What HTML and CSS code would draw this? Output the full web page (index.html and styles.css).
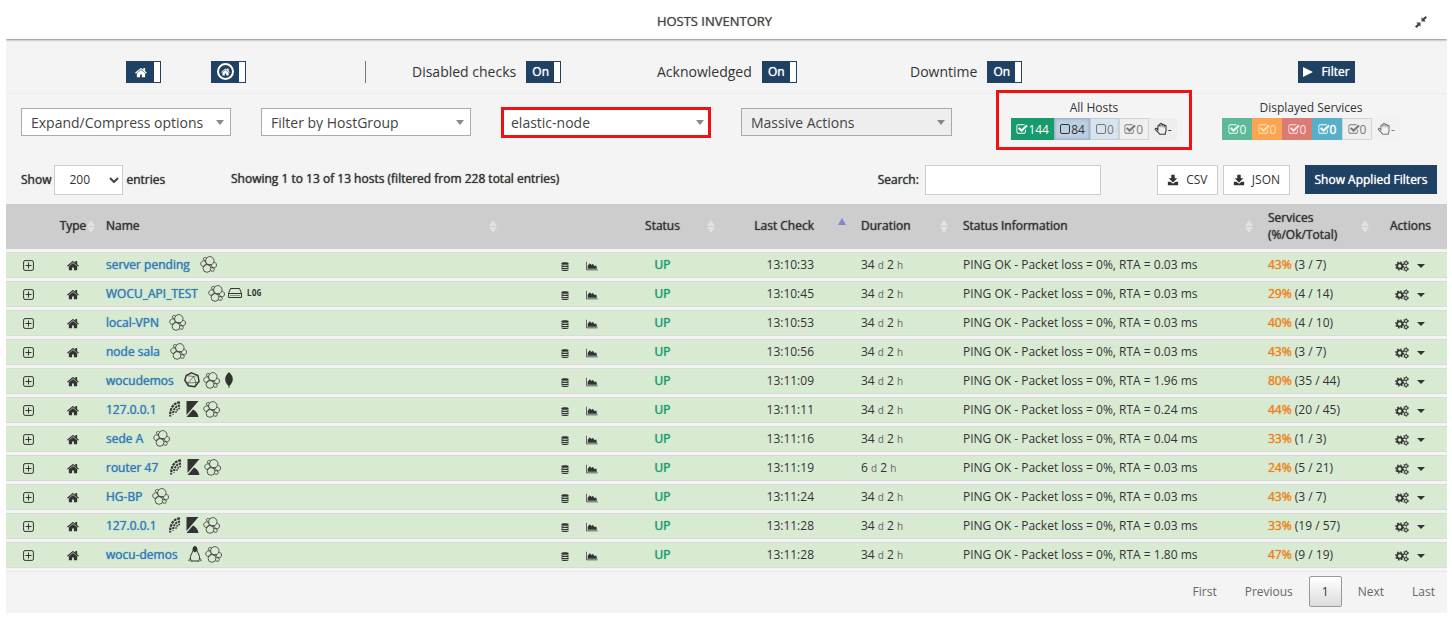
FILE: index.html
```
<!DOCTYPE html>
<html lang="en">
<head>
<meta charset="utf-8">
<title>Hosts Inventory</title>
<link rel="stylesheet" href="styles.css">
</head>
<body>
<svg class="sprite" aria-hidden="true">
  <symbol id="home" viewBox="0 0 1664 1600"><path d="M1408 992v480q0 26-19 45t-45 19H960v-384H704v384H320q-26 0-45-19t-19-45V992q0-1 .5-3t.5-3l575-474 575 474q1 2 1 6zm223-69l-62 74q-8 9-21 11h-3q-13 0-21-7L832 424l-692 577q-12 8-24 7-13-2-21-11l-62-74q-8-10-7-23.500t11-21.500l719-599q32-26 76-26t76 26l244 204V288q0-14 9-23t23-9h192q14 0 23 9t9 23v408l219 182q10 8 11 21.500t-7 23.500z"/></symbol>
  <symbol id="check" viewBox="0 60 1792 1540"><path d="M1472 930v318q0 119-84.500 203.500T1184 1536H352q-119 0-203.500-84.500T64 1248V416q0-119 84.500-203.500T352 128h832q63 0 117 25 15 7 18 23 3 17-9 29l-49 49q-10 10-23 10-3 0-9-2-23-6-45-6H352q-66 0-113 47t-47 113v832q0 66 47 113t113 47h832q66 0 113-47t47-113v-254q0-13 9-22l64-64q10-10 23-10 6 0 12 3 20 8 20 29zm231-489l-814 814q-24 24-57 24t-57-24L345 825q-24-24-24-57t24-57l110-110q24-24 57-24t57 24l263 263 647-647q24-24 57-24t57 24l110 110q24 24 24 57t-24 57z"/></symbol>
  <symbol id="box" viewBox="0 0 12 12"><rect x="1.500" y="1.500" width="9" height="9" rx="1.500" fill="none" stroke="currentColor"/></symbol>
  <symbol id="hand" viewBox="0 0 16 16"><path d="M4.500 9.500V4.200a1.200 1.200 0 0 1 2.300 0V2.700a1.200 1.200 0 0 1 2.400 0v1a1.200 1.200 0 0 1 2.400 0v1.200a1.100 1.100 0 0 1 2.200 0v4.600c0 1.500-1 2.500-1 4.500H6.500c0-1.500-4.500-4.300-5-5.500-.5-1.300 1.200-1.900 2-1z" fill="none" stroke="currentColor" stroke-width="1.200" stroke-linejoin="round"/><path d="M6.800 4v2M9.200 3.500v2.500M11.600 4.500v2" fill="none" stroke="currentColor" stroke-width=".6"/></symbol>
  <symbol id="down" viewBox="0 0 14 14"><path d="M5 1h4v4h3L7 10 2 5h3zM1 9h3l3 2.500L10 9h3v4H1z"/></symbol>
  <symbol id="compress" viewBox="0 0 12 12"><path d="M6.500 5.500V1.200l1.400 1.400L10.500 0 12 1.500 9.400 4.100l1.400 1.400zM5.500 6.500v4.300L4.100 9.400 1.500 12 0 10.500l2.600-2.600-1.400-1.400z"/></symbol>
  <symbol id="plus" viewBox="0 0 11 11"><rect x=".6" y=".6" width="9.800" height="9.800" rx="1.500" fill="none" stroke="currentColor"/><path d="M5.500 2.500v6M2.500 5.500h6" stroke="currentColor"/></symbol>
  <symbol id="db" viewBox="0 0 8 10"><path d="M0 1.300C0-.2 8-.2 8 1.300v.8C8 3.500 0 3.500 0 2.100zM0 3.300c1.500 1 6.500 1 8 0v1.300C8 6 0 6 0 4.600zM0 5.800c1.500 1 6.500 1 8 0v1.300c0 1.400-8 1.400-8 0zM0 8.200c1.500 1 6.500 1 8 0v.7c0 1.400-8 1.400-8 0z"/></symbol>
  <symbol id="chart" viewBox="0 0 2048 1792"><path d="M2048 1536v128H0V128h128v1408h1920zM1792 800l128 608H256V832l384-448 300 330 250-230 250 400z"/></symbol>
  <symbol id="cogs" viewBox="0 0 14 12"><g fill="none" stroke="currentColor"><circle cx="4.700" cy="6" r="2.600" stroke-width="1.800"/><circle cx="4.700" cy="6" r="4" stroke-width="1.200" stroke-dasharray="1.600 1.540"/><circle cx="11" cy="3" r="1.500" stroke-width="1.100"/><circle cx="11" cy="3" r="2.400" stroke-width=".8" stroke-dasharray="1.100 1.410"/><circle cx="11" cy="9" r="1.500" stroke-width="1.100"/><circle cx="11" cy="9" r="2.400" stroke-width=".8" stroke-dasharray="1.100 1.410"/></g></symbol>
  <symbol id="elastic" viewBox="0 0 17 17"><g fill="none" stroke="currentColor" stroke-width=".8"><circle cx="9.800" cy="4.800" r="4.200"/><circle cx="7" cy="12.400" r="3.900"/><path d="M5.600 4.400C3.300 4.600 2.600 2.300 4.300 1.600c1-.4 2 0 2.500.6M6 6.700C5.600 5.300 4.200 4.500 2.900 5 .4 5.600.1 9 1.900 10c.6.400 1.300.5 1.800.3M3.700 10.300c1.700-.4 2.500-1.800 2.600-3.200M13.500 6.500c1.500-.5 3 .7 3 2.500 0 2-1.300 3-2.700 2.700-1.800-.2-2.700-1.700-2.300-3.200M10.900 12c.8-.8 3.300-.5 3.400 1.400.1 1.800-2 2.500-3.600 1.300M8.500 8.800l2.700-.1"/></g></symbol>
  <symbol id="drive" viewBox="0 0 14 12"><path d="M2.500 1.500h9l2 5v4H.5v-4zM.5 6.500h13" fill="none" stroke="currentColor"/><path d="M2.500 8.500h9" stroke="currentColor" stroke-dasharray="1 1"/></symbol>
  <symbol id="poly" viewBox="0 0 16 16"><path d="M7.500.8l6.400 2.600 1.200 6.200-4.300 5.200-6.400-1L.8 8.500l1.400-5z" fill="none" stroke="currentColor" stroke-width="1.400"/><path d="M9.500 4.500L4 11l8-.5zM9.500 4.500l4.400-1.100M4 11L.8 8.500M4 11l.4 2.800M12 10.500l-1.200 4.300M9.500 4.500L2.200 3.500M12 10.500l3.100-.9" fill="none" stroke="currentColor" stroke-width=".6"/></symbol>
  <symbol id="leaf" viewBox="0 0 8 16"><path d="M4 0c5 5 5 9 .5 14l-.2 2h-.6l-.2-2C-1 9-1 5 4 0z"/></symbol>
  <symbol id="shell" viewBox="0 0 12 16"><g fill="none" stroke="currentColor"><path d="M11.500 1.300C5 2 1.500 6.500 1.700 15.500" stroke-width="2.200" stroke-dasharray="2.800 .8"/><path d="M11.500 4.500C7 5 4.700 8.500 4.500 13.500" stroke-width="2" stroke-dasharray="2.200 .8"/><path d="M11.500 7.300C9 7.800 7.500 10 7.200 12.300" stroke-width="1.500" stroke-dasharray="1.600 .8"/></g></symbol>
  <symbol id="kibana" viewBox="0 0 12 16"><path d="M0 0h12L0 14zM6.500 8.500c3 1.300 5 4 5.500 7.500H0z"/></symbol>
  <symbol id="tux" viewBox="0 0 14 16"><path d="M5 4.500C4.300-.7 9.600-.7 9 4.500c.3 2 3 4.500 2.700 8.500l-2 2H4.300l-2-2C2 9 4.700 6.500 5 4.500z" fill="none" stroke="currentColor"/><path d="M5 1.500C6-.3 8.500 0 9 2v3L7 6.500 5 5z"/><path d="M2.300 12L.5 14.500 4.500 15.500M11.700 12l1.800 2.500-4 1" fill="none" stroke="currentColor" stroke-width=".7"/></symbol>
</svg>

<main class="panel">
  <header class="titlebar">
    <h1>HOSTS INVENTORY</h1>
    <button class="compress" aria-label="Compress"><svg><use href="#compress"/></svg></button>
  </header>

  <section class="switches">
    <label class="toggle"><input type="checkbox" checked aria-label="Hosts"><span><svg class="i-home"><use href="#home"/></svg></span></label>
    <label class="toggle"><input type="checkbox" checked aria-label="Host groups"><span><b class="ring"><svg class="i-mini"><use href="#home"/></svg></b></span></label>
    <i class="separator"></i>
    <label class="toggle">Disabled checks<input type="checkbox" checked><span class="bold">On</span></label>
    <label class="toggle">Acknowledged<input type="checkbox" checked><span class="bold">On</span></label>
    <label class="toggle">Downtime<input type="checkbox" checked><span class="bold">On</span></label>
    <button class="primary filter bold"><i class="play"></i>Filter</button>
  </section>

  <section class="selects">
    <div class="combo"><select aria-label="Expand or compress"><option>Expand/Compress options</option></select></div>
    <div class="combo"><select aria-label="Host group"><option>Filter by HostGroup</option></select></div>
    <div class="combo marked"><select aria-label="Filter"><option>elastic-node</option></select></div>
    <div class="combo muted"><select aria-label="Massive actions"><option>Massive Actions</option></select></div>
    <div class="counts hosts">
      <p>All Hosts</p>
      <div class="badges">
        <button class="up"><svg><use href="#check"/></svg>144</button><button class="down"><svg><use href="#box"/></svg>84</button><button class="pale"><svg><use href="#box"/></svg>0</button><button class="gray"><svg><use href="#check"/></svg>0</button><button class="held"><svg class="i-hand"><use href="#hand"/></svg>-</button>
      </div>
    </div>
    <div class="counts services">
      <p>Displayed Services</p>
      <div class="badges">
        <button class="ok"><svg><use href="#check"/></svg>0</button><button class="warn"><svg><use href="#check"/></svg>0</button><button class="crit"><svg><use href="#check"/></svg>0</button><button class="unknown bold"><svg><use href="#check"/></svg>0</button><button class="gray"><svg><use href="#check"/></svg>0</button><button class="held faded"><svg class="i-hand"><use href="#hand"/></svg>-</button>
      </div>
    </div>
  </section>

  <section class="tools">
    <label class="length bold">Show <span class="pick"><select><option>200</option></select><svg viewBox="0 0 10 6"><path d="M1 1l4 4 4-4"/></svg></span> entries</label>
    <p class="info bold">Showing 1 to 13 of 13 hosts (filtered from 228 total entries)</p>
    <label class="search bold">Search: <input type="text"></label>
    <button class="plain"><svg><use href="#down"/></svg>CSV</button>
    <button class="plain"><svg><use href="#down"/></svg>JSON</button>
    <button class="primary applied bold">Show Applied Filters</button>
  </section>

  <table class="inventory">
    <colgroup><col class="w-open"><col class="w-type"><col><col class="w-tools"><col class="w-status"><col class="w-last"><col class="w-duration"><col class="w-info"><col class="w-services"><col class="w-actions"></colgroup>
    <thead>
      <tr><th></th><th class="mid sort tight">Type</th><th class="sort">Name</th><th></th><th class="mid sort">Status</th><th class="end sort asc">Last Check</th><th class="sort">Duration</th><th class="sort">Status Information</th><th class="sort">Services (%/Ok/Total)</th><th class="mid">Actions</th></tr>
    </thead>
    <tbody>
      <tr><td class="mid"><button aria-label="Expand"><svg class="i-plus"><use href="#plus"/></svg></button></td><td class="mid"><svg class="i-home"><use href="#home"/></svg></td><td><div class="host"><a href="#">server pending</a><svg class="i-el"><use href="#elastic"/></svg></div></td><td><div class="pair"><svg class="i-db"><use href="#db"/></svg><svg class="i-chart"><use href="#chart"/></svg></div></td><td class="mid state">UP</td><td class="end">13:10:33</td><td>34 <small>d</small> 2 <small>h</small></td><td>PING OK - Packet loss = 0%, RTA = 0.03 ms</td><td><b>43%</b> (3 / 7)</td><td><button class="act" aria-label="Actions"><svg class="i-cogs"><use href="#cogs"/></svg><i class="caret"></i></button></td></tr>
      <tr><td class="mid"><button aria-label="Expand"><svg class="i-plus"><use href="#plus"/></svg></button></td><td class="mid"><svg class="i-home"><use href="#home"/></svg></td><td><div class="host"><a href="#">WOCU_API_TEST</a><svg class="i-el"><use href="#elastic"/></svg><svg class="i-drive"><use href="#drive"/></svg><span class="log">LOG</span></div></td><td><div class="pair"><svg class="i-db"><use href="#db"/></svg><svg class="i-chart"><use href="#chart"/></svg></div></td><td class="mid state">UP</td><td class="end">13:10:45</td><td>34 <small>d</small> 2 <small>h</small></td><td>PING OK - Packet loss = 0%, RTA = 0.03 ms</td><td><b>29%</b> (4 / 14)</td><td><button class="act" aria-label="Actions"><svg class="i-cogs"><use href="#cogs"/></svg><i class="caret"></i></button></td></tr>
      <tr><td class="mid"><button aria-label="Expand"><svg class="i-plus"><use href="#plus"/></svg></button></td><td class="mid"><svg class="i-home"><use href="#home"/></svg></td><td><div class="host"><a href="#">local-VPN</a><svg class="i-el"><use href="#elastic"/></svg></div></td><td><div class="pair"><svg class="i-db"><use href="#db"/></svg><svg class="i-chart"><use href="#chart"/></svg></div></td><td class="mid state">UP</td><td class="end">13:10:53</td><td>34 <small>d</small> 2 <small>h</small></td><td>PING OK - Packet loss = 0%, RTA = 0.03 ms</td><td><b>40%</b> (4 / 10)</td><td><button class="act" aria-label="Actions"><svg class="i-cogs"><use href="#cogs"/></svg><i class="caret"></i></button></td></tr>
      <tr><td class="mid"><button aria-label="Expand"><svg class="i-plus"><use href="#plus"/></svg></button></td><td class="mid"><svg class="i-home"><use href="#home"/></svg></td><td><div class="host"><a href="#">node sala</a><svg class="i-el"><use href="#elastic"/></svg></div></td><td><div class="pair"><svg class="i-db"><use href="#db"/></svg><svg class="i-chart"><use href="#chart"/></svg></div></td><td class="mid state">UP</td><td class="end">13:10:56</td><td>34 <small>d</small> 2 <small>h</small></td><td>PING OK - Packet loss = 0%, RTA = 0.03 ms</td><td><b>43%</b> (3 / 7)</td><td><button class="act" aria-label="Actions"><svg class="i-cogs"><use href="#cogs"/></svg><i class="caret"></i></button></td></tr>
      <tr><td class="mid"><button aria-label="Expand"><svg class="i-plus"><use href="#plus"/></svg></button></td><td class="mid"><svg class="i-home"><use href="#home"/></svg></td><td><div class="host"><a href="#">wocudemos</a><svg class="i-poly"><use href="#poly"/></svg><svg class="i-el"><use href="#elastic"/></svg><svg class="i-leaf"><use href="#leaf"/></svg></div></td><td><div class="pair"><svg class="i-db"><use href="#db"/></svg><svg class="i-chart"><use href="#chart"/></svg></div></td><td class="mid state">UP</td><td class="end">13:11:09</td><td>34 <small>d</small> 2 <small>h</small></td><td>PING OK - Packet loss = 0%, RTA = 1.96 ms</td><td><b>80%</b> (35 / 44)</td><td><button class="act" aria-label="Actions"><svg class="i-cogs"><use href="#cogs"/></svg><i class="caret"></i></button></td></tr>
      <tr><td class="mid"><button aria-label="Expand"><svg class="i-plus"><use href="#plus"/></svg></button></td><td class="mid"><svg class="i-home"><use href="#home"/></svg></td><td><div class="host"><a href="#">127.0.0.1</a><svg class="i-slim"><use href="#shell"/></svg><svg class="i-slim"><use href="#kibana"/></svg><svg class="i-el"><use href="#elastic"/></svg></div></td><td><div class="pair"><svg class="i-db"><use href="#db"/></svg><svg class="i-chart"><use href="#chart"/></svg></div></td><td class="mid state">UP</td><td class="end">13:11:11</td><td>34 <small>d</small> 2 <small>h</small></td><td>PING OK - Packet loss = 0%, RTA = 0.24 ms</td><td><b>44%</b> (20 / 45)</td><td><button class="act" aria-label="Actions"><svg class="i-cogs"><use href="#cogs"/></svg><i class="caret"></i></button></td></tr>
      <tr><td class="mid"><button aria-label="Expand"><svg class="i-plus"><use href="#plus"/></svg></button></td><td class="mid"><svg class="i-home"><use href="#home"/></svg></td><td><div class="host"><a href="#">sede A</a><svg class="i-el"><use href="#elastic"/></svg></div></td><td><div class="pair"><svg class="i-db"><use href="#db"/></svg><svg class="i-chart"><use href="#chart"/></svg></div></td><td class="mid state">UP</td><td class="end">13:11:16</td><td>34 <small>d</small> 2 <small>h</small></td><td>PING OK - Packet loss = 0%, RTA = 0.04 ms</td><td><b>33%</b> (1 / 3)</td><td><button class="act" aria-label="Actions"><svg class="i-cogs"><use href="#cogs"/></svg><i class="caret"></i></button></td></tr>
      <tr><td class="mid"><button aria-label="Expand"><svg class="i-plus"><use href="#plus"/></svg></button></td><td class="mid"><svg class="i-home"><use href="#home"/></svg></td><td><div class="host"><a href="#">router 47</a><svg class="i-slim"><use href="#shell"/></svg><svg class="i-slim"><use href="#kibana"/></svg><svg class="i-el"><use href="#elastic"/></svg></div></td><td><div class="pair"><svg class="i-db"><use href="#db"/></svg><svg class="i-chart"><use href="#chart"/></svg></div></td><td class="mid state">UP</td><td class="end">13:11:19</td><td>6 <small>d</small> 2 <small>h</small></td><td>PING OK - Packet loss = 0%, RTA = 0.03 ms</td><td><b>24%</b> (5 / 21)</td><td><button class="act" aria-label="Actions"><svg class="i-cogs"><use href="#cogs"/></svg><i class="caret"></i></button></td></tr>
      <tr><td class="mid"><button aria-label="Expand"><svg class="i-plus"><use href="#plus"/></svg></button></td><td class="mid"><svg class="i-home"><use href="#home"/></svg></td><td><div class="host"><a href="#">HG-BP</a><svg class="i-el"><use href="#elastic"/></svg></div></td><td><div class="pair"><svg class="i-db"><use href="#db"/></svg><svg class="i-chart"><use href="#chart"/></svg></div></td><td class="mid state">UP</td><td class="end">13:11:24</td><td>34 <small>d</small> 2 <small>h</small></td><td>PING OK - Packet loss = 0%, RTA = 0.03 ms</td><td><b>43%</b> (3 / 7)</td><td><button class="act" aria-label="Actions"><svg class="i-cogs"><use href="#cogs"/></svg><i class="caret"></i></button></td></tr>
      <tr><td class="mid"><button aria-label="Expand"><svg class="i-plus"><use href="#plus"/></svg></button></td><td class="mid"><svg class="i-home"><use href="#home"/></svg></td><td><div class="host"><a href="#">127.0.0.1</a><svg class="i-slim"><use href="#shell"/></svg><svg class="i-slim"><use href="#kibana"/></svg><svg class="i-el"><use href="#elastic"/></svg></div></td><td><div class="pair"><svg class="i-db"><use href="#db"/></svg><svg class="i-chart"><use href="#chart"/></svg></div></td><td class="mid state">UP</td><td class="end">13:11:28</td><td>34 <small>d</small> 2 <small>h</small></td><td>PING OK - Packet loss = 0%, RTA = 0.03 ms</td><td><b>33%</b> (19 / 57)</td><td><button class="act" aria-label="Actions"><svg class="i-cogs"><use href="#cogs"/></svg><i class="caret"></i></button></td></tr>
      <tr><td class="mid"><button aria-label="Expand"><svg class="i-plus"><use href="#plus"/></svg></button></td><td class="mid"><svg class="i-home"><use href="#home"/></svg></td><td><div class="host"><a href="#">wocu-demos</a><svg class="i-tux"><use href="#tux"/></svg><svg class="i-el"><use href="#elastic"/></svg></div></td><td><div class="pair"><svg class="i-db"><use href="#db"/></svg><svg class="i-chart"><use href="#chart"/></svg></div></td><td class="mid state">UP</td><td class="end">13:11:28</td><td>34 <small>d</small> 2 <small>h</small></td><td>PING OK - Packet loss = 0%, RTA = 1.80 ms</td><td><b>47%</b> (9 / 19)</td><td><button class="act" aria-label="Actions"><svg class="i-cogs"><use href="#cogs"/></svg><i class="caret"></i></button></td></tr>
    </tbody>
  </table>

  <nav class="pager" aria-label="Pages">
    <a href="#">First</a><a href="#">Previous</a><a href="#" class="current">1</a><a href="#">Next</a><a href="#">Last</a>
  </nav>
</main>
</body>
</html>
```
FILE: styles.css
```
* { box-sizing: border-box; }
body { margin: 4px 5px 6px 6px; background: #fff; color: #333; font: 12px/17px "Open Sans", "Noto Sans", sans-serif; }
button, input, select { font: inherit; color: inherit; margin: 0; border-radius: 0; }
button { padding: 0; border: 0; background: none; cursor: pointer; }
p, h1 { margin: 0; }
svg { fill: currentColor; flex: none; }
.sprite { position: absolute; width: 0; height: 0; }
.bold, th { font-weight: 400; text-shadow: 0 0 1px currentColor; }

.panel { background: #f4f4f4; box-shadow: 0 1px 4px 1px rgba(0, 0, 0, .45); }
.titlebar { display: grid; grid-template-columns: 28px 1fr 52px; align-items: center; height: 35px; background: #fff; box-shadow: 0 1px 2px rgba(0, 0, 0, .45); }
.titlebar h1 { grid-column: 2; text-align: center; font-size: 13px; font-weight: 400; color: #444; text-shadow: 0 0 1px #777; }
.compress { justify-self: center; color: #444; display: flex; }
.compress svg { width: 12px; height: 12px; }

.switches { display: grid; grid-template-columns: 85fr 154fr 47fr 245fr 253fr 388fr 149fr; align-items: center; height: 55px; padding: 11px 0 0 120px; border-bottom: 1px solid #ebebeb; }
.toggle { display: flex; align-items: center; gap: 10px; font-size: 14px; line-height: 20px; position: relative; justify-self: start; }
.toggle input { position: absolute; opacity: 0; width: 1px; height: 1px; }
.toggle span { display: flex; align-items: center; justify-content: center; width: 35px; height: 22px; border: 1px solid #1e4164; background: linear-gradient(90deg, #1e4164 27px, #fff 27px); padding-right: 6px; color: #fff; font-size: 12px; }
.ring { display: flex; align-items: center; justify-content: center; width: 17px; height: 17px; border: 2px solid #fff; border-radius: 50%; }
.i-home { width: 12px; height: 12px; }
.i-mini { width: 9px; height: 9px; }
.separator { width: 1px; height: 22px; background: #777; }
.primary { background: #1e4164; color: #fff; }
.filter { display: flex; align-items: center; justify-content: center; gap: 8px; justify-self: start; min-width: 57px; height: 22px; }
.play { border-left: 10px solid #fff; border-top: 5px solid transparent; border-bottom: 5px solid transparent; }

.selects { display: grid; grid-template-columns: 210fr 210fr 210fr 211fr 196fr 239fr; column-gap: 30px; height: 66px; padding: 14px 0 0 15px; }
.combo { position: relative; height: 28px; }
.combo select { width: 100%; height: 100%; padding: 0 9px; border: 1px solid #aaa; background: #fff; appearance: none; color: #444; font-size: 14px; }
.combo::after { content: ""; position: absolute; right: 7px; top: 12px; border-top: 5px solid #888; border-left: 4px solid transparent; border-right: 4px solid transparent; pointer-events: none; }
.marked select { border: 3px solid #ee1212; padding: 0 7px; height: 31px; margin-top: -1px; display: block; }
.muted select { background: #eee; }
.counts { position: relative; height: 46px; margin-top: -9px; margin-left: 14px; }
.counts p { text-align: center; height: 19px; }
.hosts { display: flex; flex-direction: column; align-items: center; margin-right: -14px; }
.hosts::after { content: ""; position: absolute; inset: -9px 0 -5px 0; border: 3px solid #ee1212; pointer-events: none; }
.services { justify-self: start; }
.badges { display: flex; }
.badges button { display: flex; align-items: center; justify-content: center; min-width: 30px; height: 22px; padding: 0 4px; border: 1px solid transparent; }
.badges svg { width: 12px; height: 12px; }
.badges .i-hand { width: 14px; height: 14px; }
.badges .up { background: #179a6d; color: #fff; min-width: 43px; }
.badges .down { background: #bdd0e2; border-color: #9fb4c8; min-width: 34px; box-shadow: inset 0 0 3px #8fa8c0; }
.badges .pale { background: #d7e3ee; border-color: #c3ccd4; color: #777; min-width: 28px; }
.badges .gray { background: #efefef; border-color: #d4d4d4; color: #777; }
.badges .held { background: #eee; min-width: 28px; }
.badges .faded { color: #777; background: #f2f2f2; }
.badges .ok { background: #5fb898; color: #e8fff6; }
.badges .warn { background: #f9a553; color: #ffe3a8; }
.badges .crit { background: #da7b76; color: #ffe4e2; }
.badges .unknown { background: #57b0c9; color: #fff; }

.tools { display: flex; align-items: center; height: 41px; padding: 0 10px 2px 15px; }
.length { display: flex; align-items: center; gap: 3px; flex: 0 0 210px; }
.pick { position: relative; display: flex; align-items: center; }
.pick select { width: 69px; height: 30px; padding: 0 14px; border: 1px solid #ccc; background: #fff; appearance: none; }
.pick svg { position: absolute; right: 4px; width: 10px; height: 6px; fill: none; stroke: #444; stroke-width: 2; pointer-events: none; }
.info { flex: 1; padding-bottom: 2px; }
.search { display: flex; align-items: center; gap: 6px; margin-right: 56px; }
.search input { width: 176px; height: 30px; border: 1px solid #ccc; background: #fff; }
.plain { display: flex; align-items: center; justify-content: center; gap: 7px; min-width: 61px; height: 30px; padding: 0 9px; margin-right: 5px; border: 1px solid #ccc; background: #fff; }
.plain svg { width: 12px; height: 12px; }
.applied { height: 29px; margin-left: 10px; width: 132px; white-space: nowrap; }

.inventory { width: 100%; table-layout: fixed; border-collapse: separate; border-spacing: 0 3px; }
.w-open { width: 44px; } .w-type { width: 46px; } .w-tools { width: 103px; } .w-status { width: 115px; } .w-last { width: 131px; }
.w-duration { width: 102px; } .w-info { width: 305px; } .w-services { width: 116px; } .w-actions { width: 73px; }
.inventory th, .inventory td { padding: 0 10px 2px; text-align: left; white-space: nowrap; }
.inventory th { position: relative; height: 45px; background: #cdcdcd; white-space: normal; }
.inventory td { height: 26px; background: #d9ead3; border-top: 1px solid #d8dcd6; border-bottom: 1px solid #d8dcd6; }
.inventory .mid { text-align: center; padding: 0 0 2px; }
.inventory .end { text-align: right; padding-right: 37px; }
.inventory td > svg, .inventory button svg { vertical-align: middle; }
.sort::before, .sort::after { content: ""; position: absolute; right: 5px; border: 4px solid transparent; }
.sort::before { top: 12px; border-bottom: 6px solid #e2e2e2; }
.sort::after { top: 23px; border-top: 6px solid #e2e2e2; }
.tight::before, .tight::after { right: 1px; }
.asc::before { border-bottom: 7px solid #7d88cf; top: 10px; }
.asc::after { display: none; }
.host, .pair, .act { display: flex; align-items: center; }
.host { gap: 3px; }
.host a { color: #337ab7; text-decoration: none; text-shadow: 0 0 1px #337ab7; margin-right: 7px; }
.pair { gap: 17px; padding: 4px 0 0 49px; }
.state { color: #179a6d; text-shadow: 0 0 1px #179a6d; }
td b { font-weight: 400; color: #ee7f1a; text-shadow: 0 0 1px #ee7f1a; }
small { font-size: 10px; line-height: 10px; color: #666; }
.log { font: bold 8px/10px "DejaVu Sans Mono", monospace; padding: 2px 0 0 2px; }
.act { gap: 8px; padding: 3px 0 0 11px; }
.caret { border-top: 4px solid #333; border-left: 4px solid transparent; border-right: 4px solid transparent; }
.i-plus { width: 11px; height: 11px; }
.i-el { width: 17px; height: 17px; }
.i-poly { width: 16px; height: 16px; }
.i-drive { width: 14px; height: 12px; }
.i-slim { width: 15px; height: 16px; }
.i-leaf { width: 12px; height: 16px; }
.i-tux { width: 14px; height: 16px; }
.i-db { width: 8px; height: 9px; }
.i-chart { width: 12px; height: 10px; }
.i-cogs { width: 14px; height: 12px; }

.pager { display: flex; align-items: center; justify-content: flex-end; gap: 4px; height: 42px; padding-bottom: 2px; border-top: 1px solid #e8e8e8; }
.pager a { padding: 0 12px; color: #666; text-decoration: none; }
.pager .current { padding: 6px 12px; border: 1px solid #999; border-radius: 2px; background: linear-gradient(#fff, #dcdcdc); color: #333; }
```
